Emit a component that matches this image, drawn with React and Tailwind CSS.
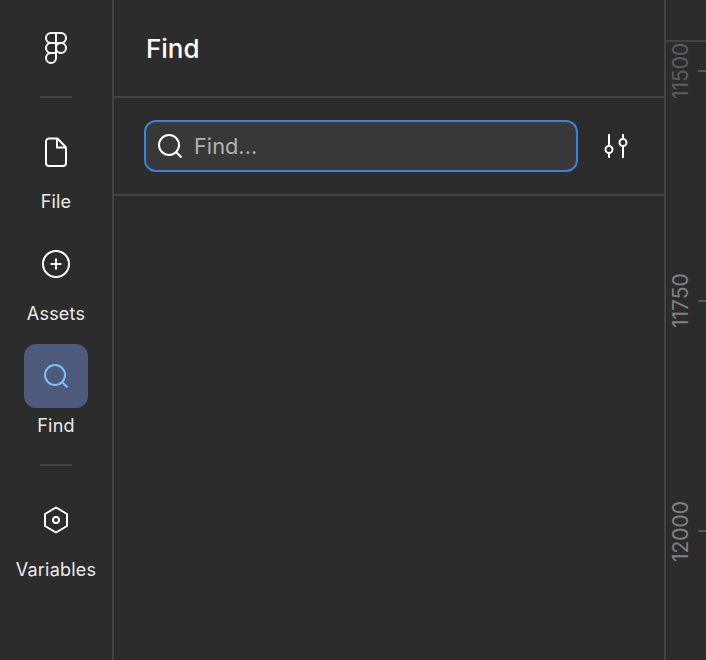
const NAV = [
  { label: 'File', icon: <FileIcon /> },
  { label: 'Assets', icon: <AssetsIcon /> },
  { label: 'Find', icon: <SearchIcon className="w-6 h-6 text-[#7cc0f8]" />, active: true },
]

function FigmaIcon() {
  return (
    <svg width="24" height="32" viewBox="0 0 24 32" fill="none" stroke="white" strokeWidth="2">
      <path d="M2 6a5 5 0 0 1 5-5h5v10H7a5 5 0 0 1-5-5Z" />
      <path d="M12 1h5a5 5 0 0 1 0 10h-5V1Z" />
      <path d="M2 16a5 5 0 0 1 5-5h5v10H7a5 5 0 0 1-5-5Z" />
      <circle cx="17" cy="16" r="5" />
      <path d="M2 26a5 5 0 0 1 5-5h5v5a5 5 0 0 1-10 0Z" />
    </svg>
  )
}

function FileIcon() {
  return (
    <svg width="22" height="30" viewBox="0 0 22 30" fill="none" stroke="white" strokeWidth="2">
      <path d="M4 1.500h8.500l8.500 9V26a3 3 0 0 1-3 3H4a3 3 0 0 1-3-3V4.500a3 3 0 0 1 3-3Z" strokeLinejoin="round" />
      <path d="M12 1.500v9h9" />
    </svg>
  )
}

function AssetsIcon() {
  return (
    <svg width="30" height="30" viewBox="0 0 30 30" fill="none" stroke="white" strokeWidth="2">
      <circle cx="15" cy="15" r="13" />
      <path d="M15 9.500v11M9.500 15h11" />
    </svg>
  )
}

function SearchIcon({ className }) {
  return (
    <svg className={className} viewBox="0 0 24 24" fill="none" stroke="currentColor" strokeWidth="2">
      <circle cx="11" cy="11" r="10" />
      <path d="M18 18l5.500 5.500" />
    </svg>
  )
}

function VariablesIcon() {
  return (
    <svg width="26" height="28" viewBox="0 0 26 28" fill="none" stroke="white" strokeWidth="2">
      <path d="M13 1.500 24 8v12l-11 6.500L2 20V8L13 1.500Z" strokeLinejoin="round" />
      <circle cx="13" cy="14" r="3" />
    </svg>
  )
}

function FilterIcon() {
  return (
    <svg width="26" height="26" viewBox="0 0 26 26" fill="none" stroke="white" strokeWidth="2">
      <path d="M6 1v12M6 20v5M20 1v5M20 13v12" />
      <circle cx="6" cy="16.500" r="3.500" />
      <circle cx="20" cy="9.500" r="3.500" />
    </svg>
  )
}

function NavItem({ label, icon, active }) {
  return (
    <div className="flex flex-col items-center">
      <div className={`w-16 h-16 rounded-xl flex items-center justify-center ${active ? 'bg-[#4d5a7c]' : ''}`}>
        {icon}
      </div>
      <span className="mt-2 text-[18px] leading-[20px] text-[#ebebeb] tracking-[0.2px]">{label}</span>
    </div>
  )
}

function Divider() {
  return <div className="w-8 h-0.5 bg-[#444444]" />
}

function RulerMark({ top, label, dim }) {
  return (
    <>
      <div className="absolute right-0 w-2 h-0.5 bg-[#555555]" style={{ top }} />
      <span
        className={`absolute left-[5px] h-20 text-center text-[21px] leading-[20px] [writing-mode:vertical-rl] rotate-180 ${dim ? 'text-[#5c5c5c]' : 'text-[#808080]'}`}
        style={{ top: top - 39 }}
      >
        {label}
      </span>
    </>
  )
}

export default function App() {
  return (
    <div className="h-[660px] w-[706px] flex overflow-hidden bg-[#2c2c2c] font-['Inter',sans-serif]">
      {/* sidebar */}
      <aside className="w-[114px] shrink-0 border-r-2 border-[#444444] flex flex-col items-center">
        <div className="h-24 flex items-center justify-center"><FigmaIcon /></div>
        <Divider />
        <div className="mt-[22px] flex flex-col gap-5">
          {NAV.map(n => <NavItem key={n.label} {...n} />)}
        </div>
        <div className="mt-[28px]"><Divider /></div>
        <div className="mt-[22px]">
          <NavItem label="Variables" icon={<VariablesIcon />} />
        </div>
      </aside>

      {/* find panel */}
      <main className="w-[552px] shrink-0 border-r-2 border-[#444444]">
        <header className="h-[98px] border-b-2 border-[#444444] flex items-center pl-8">
          <h1 className="text-[26px] font-medium text-white">Find</h1>
        </header>
        <div className="h-[98px] border-b-2 border-[#444444] flex items-center pl-[30px]">
          <div className="w-[434px] h-[52px] rounded-xl border-2 border-[#3b82d6] bg-[#383838] flex items-center pl-3 gap-3">
            <SearchIcon className="w-6 h-6 text-white" />
            <span className="text-[21.800px] text-[#b0b0b0]">Find...</span>
          </div>
          <div className="ml-[25px]"><FilterIcon /></div>
        </div>
      </main>

      {/* ruler */}
      <div className="relative flex-1">
        <div className="absolute top-10 inset-x-0 h-0.5 bg-[#444444]" />
        <RulerMark top={70} label="11500" dim />
        <RulerMark top={300} label="11750" />
        <RulerMark top={530} label="12000" />
      </div>
    </div>
  )
}
